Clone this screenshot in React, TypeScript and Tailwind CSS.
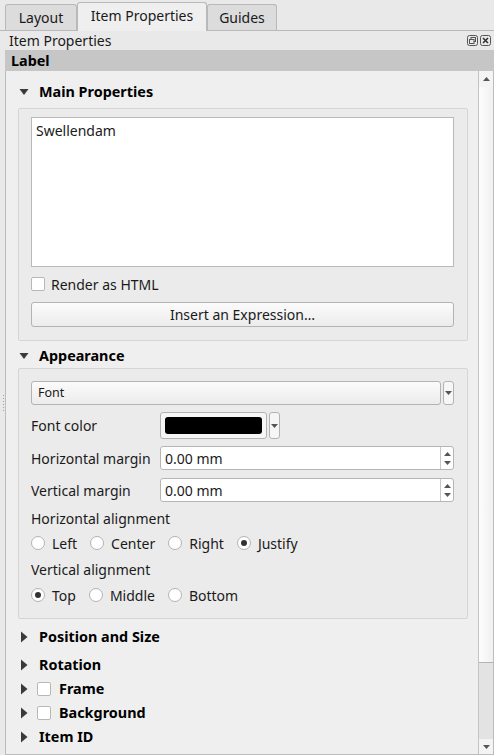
import React from 'react';

const font = { fontFamily: '"Noto Sans", "Open Sans", sans-serif' };

function Caret({ open }: { open: boolean }) {
  return (
    <svg width="10" height="12" viewBox="0 0 10 12" className="shrink-0">
      {open ? (
        <path d="M0.5 3 L9.5 3 L5 9 Z" fill="#3a3a3a" />
      ) : (
        <path d="M2 0.5 L8.5 6 L2 11.5 Z" fill="#3a3a3a" />
      )}
    </svg>
  );
}

function SmallArrow({ up }: { up?: boolean }) {
  return (
    <svg width="7" height="4" viewBox="0 0 7 4">
      {up ? (
        <path d="M0 4 L3.5 0 L7 4 Z" fill="#555" />
      ) : (
        <path d="M0 0 L7 0 L3.5 4 Z" fill="#555" />
      )}
    </svg>
  );
}

function SectionHeader({
  title,
  open,
  checkbox,
  className,
}: {
  title: string;
  open?: boolean;
  checkbox?: boolean;
  className?: string;
}) {
  return (
    <div className={`flex h-[20px] items-center pl-[1px] ${className ?? ''}`}>
      <Caret open={!!open} />
      {checkbox && (
        <span className="ml-[8px] h-[14px] w-[14px] shrink-0 rounded-[2px] border border-[#b8b8b8] bg-white" />
      )}
      <span
        className={`${checkbox ? 'ml-[8px]' : 'ml-[10px]'} text-[14.4px] font-bold text-black`}
      >
        {title}
      </span>
    </div>
  );
}

function Radio({ label, checked }: { label: string; checked?: boolean }) {
  return (
    <div className="flex items-center gap-[7px]">
      <span className="flex h-[14px] w-[14px] items-center justify-center rounded-full border border-[#b3b3b3] bg-white">
        {checked && <span className="h-[6px] w-[6px] rounded-full bg-[#333]" />}
      </span>
      <span>{label}</span>
    </div>
  );
}

function SpinBox({ value, className }: { value: string; className?: string }) {
  return (
    <div
      className={`flex h-[24px] flex-1 rounded-[3px] border border-[#b5b5b5] bg-white ${className ?? ''}`}
    >
      <span className="flex flex-1 items-center pl-[4px]">{value}</span>
      <div className="flex w-[13px] flex-col items-center justify-center gap-[5px] border-l border-[#c8c8c8]">
        <SmallArrow up />
        <SmallArrow />
      </div>
    </div>
  );
}

function FieldRow({
  label,
  children,
  className,
}: {
  label: string;
  children: React.ReactNode;
  className?: string;
}) {
  return (
    <div className={`flex items-center ${className ?? ''}`}>
      <span className="w-[129px] shrink-0">{label}</span>
      {children}
    </div>
  );
}

export default function App() {
  return (
    <div
      className="flex h-[755px] w-[494px] flex-col overflow-hidden bg-[#e9e9e9] text-[14px] text-[#1a1a1a]"
      style={font}
    >
      {/* tab bar */}
      <div className="flex h-[31px] items-end border-b border-[#b9b9b9] pl-[5px]">
        <div className="flex h-[26px] w-[72px] items-center justify-center rounded-t-[3px] border border-b-0 border-[#b9b9b9] bg-[#dcdcdc]">
          Layout
        </div>
        <div className="-mb-px flex h-[29px] w-[130px] items-center justify-center rounded-t-[3px] border border-b-0 border-[#b9b9b9] bg-[#efefef] pb-[3px]">
          Item Properties
        </div>
        <div className="flex h-[26px] w-[70px] items-center justify-center rounded-t-[3px] border border-b-0 border-[#b9b9b9] bg-[#dcdcdc]">
          Guides
        </div>
      </div>

      {/* dock title */}
      <div className="flex h-[19px] items-center justify-between pl-[9px] pr-[3px]">
        <span>Item Properties</span>
        <div className="flex gap-[2px]">
          <svg width="11" height="11" viewBox="0 0 11 11">
            <rect x="0.5" y="0.5" width="10" height="10" rx="2" fill="none" stroke="#555" />
            <rect x="4" y="2.5" width="4.5" height="4" fill="none" stroke="#555" />
            <rect x="2.5" y="4.5" width="4.5" height="4" fill="#e9e9e9" stroke="#555" />
          </svg>
          <svg width="11" height="11" viewBox="0 0 11 11">
            <rect x="0.5" y="0.5" width="10" height="10" rx="2" fill="none" stroke="#555" />
            <path d="M3 3 L8 8 M8 3 L3 8" stroke="#333" strokeWidth="1.6" />
          </svg>
        </div>
      </div>

      <div className="flex flex-1 pl-[2px]">
        {/* splitter handle */}
        <div className="flex w-[3px] flex-col items-center justify-center gap-[2px]">
          {Array.from({ length: 6 }).map((_, i) => (
            <span key={i} className="h-px w-px bg-[#a0a0a0]" />
          ))}
        </div>

        <div className="flex flex-1 flex-col">
          <div className="flex h-[21px] items-center bg-[#c6c6c6] pl-[6px] text-[14.4px] font-bold text-black">
            Label
          </div>

          <div className="flex flex-1 border border-t-0 border-[#bcbcbc] bg-[#efefef]">
            <div className="flex flex-1 flex-col pl-[12px] pr-[10px] pt-[11px]">
              <SectionHeader title="Main Properties" open />
              <div className="mt-[6px] flex flex-col rounded-[2px] border border-[#d5d5d5] bg-[#ebebeb] pb-[13px] pl-[12px] pr-[13px] pt-[8px]">
                <div className="h-[150px] border border-[#b9b9b9] bg-white px-[4px] pt-[2px]">
                  Swellendam
                </div>
                <div className="mt-[7px] flex h-[20px] items-center gap-[6px]">
                  <span className="h-[14px] w-[14px] rounded-[2px] border border-[#b8b8b8] bg-white" />
                  <span>Render as HTML</span>
                </div>
                <div className="mt-[8px] flex h-[25px] items-center justify-center rounded-[3px] border border-[#b3b3b3] bg-gradient-to-b from-[#fbfbfb] to-[#ececec]">
                  Insert an Expression…
                </div>
              </div>

              <SectionHeader title="Appearance" open className="mt-[5px]" />
              <div className="mt-[2px] flex flex-col rounded-[2px] border border-[#d5d5d5] bg-[#ebebeb] pb-[14px] pl-[12px] pr-[13px] pt-[12px]">
                <div className="flex h-[24px] gap-[2px]">
                  <div className="flex flex-1 items-center rounded-[3px] border border-[#b3b3b3] bg-gradient-to-b from-[#fbfbfb] to-[#ececec] pl-[6px] text-[12.5px]">
                    Font
                  </div>
                  <div className="flex w-[11px] items-center justify-center rounded-[3px] border border-[#b3b3b3] bg-[#f6f6f6]">
                    <SmallArrow />
                  </div>
                </div>

                <FieldRow label="Font color" className="mt-[7px] h-[27px]">
                  <div className="flex h-[27px] gap-[2px]">
                    <div className="flex w-[107px] items-center justify-center rounded-[3px] border border-[#b3b3b3] bg-[#f6f6f6]">
                      <span className="h-[17px] w-[97px] rounded-[3px] bg-black" />
                    </div>
                    <div className="flex w-[11px] items-center justify-center rounded-[3px] border border-[#b3b3b3] bg-[#f6f6f6]">
                      <SmallArrow />
                    </div>
                  </div>
                </FieldRow>

                <FieldRow label="Horizontal margin" className="mt-[7px]">
                  <SpinBox value="0.00 mm" />
                </FieldRow>
                <FieldRow label="Vertical margin" className="mt-[8px]">
                  <SpinBox value="0.00 mm" />
                </FieldRow>

                <div className="mt-[7px] flex h-[18px] items-center">Horizontal alignment</div>
                <div className="mt-[7px] flex h-[18px] items-center gap-[13px]">
                  <Radio label="Left" />
                  <Radio label="Center" />
                  <Radio label="Right" />
                  <Radio label="Justify" checked />
                </div>
                <div className="mt-[8px] flex h-[18px] items-center">Vertical alignment</div>
                <div className="mt-[8px] flex h-[18px] items-center gap-[13px]">
                  <Radio label="Top" checked />
                  <Radio label="Middle" />
                  <Radio label="Bottom" />
                </div>
              </div>

              <SectionHeader title="Position and Size" className="mt-[8px]" />
              <SectionHeader title="Rotation" className="mt-[8px]" />
              <SectionHeader title="Frame" checkbox className="mt-[4px]" />
              <SectionHeader title="Background" checkbox className="mt-[4px]" />
              <SectionHeader title="Item ID" className="mt-[4px]" />
            </div>

            {/* vertical scrollbar */}
            <div className="flex w-[15px] flex-col border-l border-[#c4c4c4] bg-[#e3e3e3]">
              <div className="flex h-[16px] items-center justify-center bg-[#f4f4f4]">
                <SmallArrow up />
              </div>
              <div className="h-[576px] border-b border-[#b4b4b4] bg-gradient-to-r from-[#fdfdfd] to-[#f0f0f0]" />
              <div className="flex-1" />
              <div className="flex h-[15px] items-center justify-center bg-[#f4f4f4]">
                <SmallArrow />
              </div>
            </div>
          </div>
        </div>
      </div>
    </div>
  );
}
